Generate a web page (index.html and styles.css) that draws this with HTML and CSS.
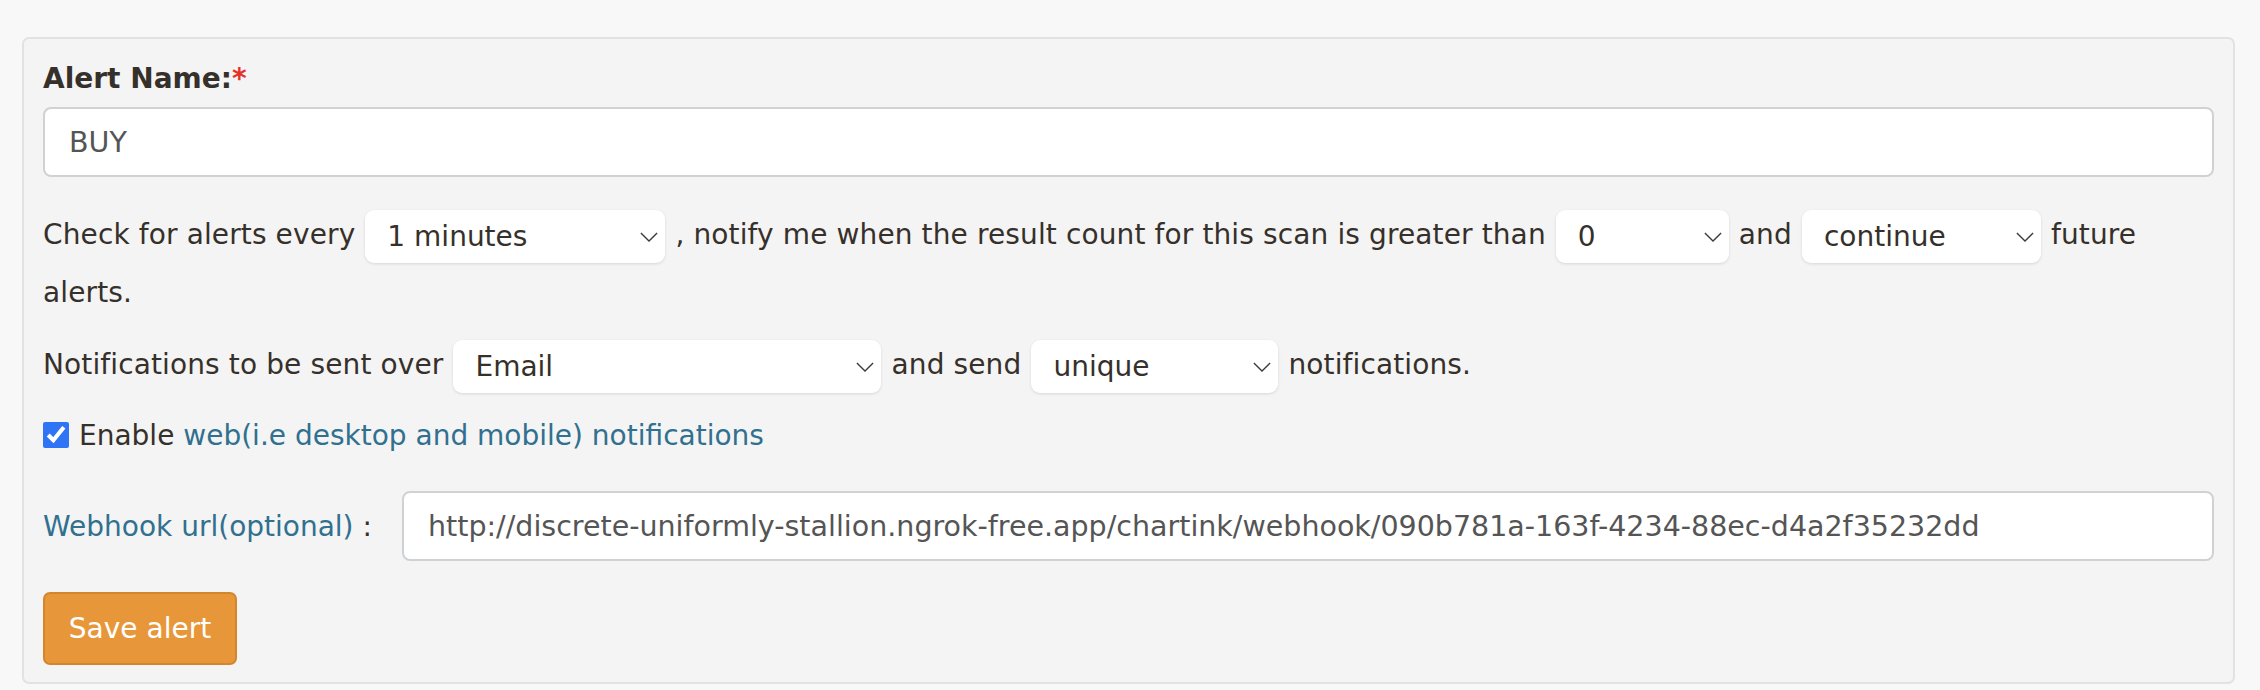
FILE: index.html
```html
<!DOCTYPE html>
<html lang="en">
<head>
    <meta charset="UTF-8">
    <title>Alert settings</title>
    <link rel="stylesheet" href="styles.css">
</head>
<body>
    <form class="alert-panel">
        <label class="field-label" for="alertName">Alert Name:<span class="req">*</span></label>
        <input type="text" id="alertName" class="text-input" value="BUY">

        <p class="sentence"><span>Check for alerts every</span>
            <span class="select-wrap w-freq"><select><option>1 minutes</option></select><svg class="chev" viewBox="0 0 20 11"><path d="M1 1l9 9 9-9"/></svg></span>
            <span>, notify me when the result count for this scan is greater than</span>
            <span class="select-wrap w-count"><select><option>0</option></select><svg class="chev" viewBox="0 0 20 11"><path d="M1 1l9 9 9-9"/></svg></span>
            <span>and</span>
            <span class="select-wrap w-mode"><select><option>continue</option></select><svg class="chev" viewBox="0 0 20 11"><path d="M1 1l9 9 9-9"/></svg></span>
            <span>future</span><br><span>alerts.</span></p>

        <p class="sentence second"><span>Notifications to be sent over</span>
            <span class="select-wrap w-channel"><select><option>Email</option></select><svg class="chev" viewBox="0 0 20 11"><path d="M1 1l9 9 9-9"/></svg></span>
            <span>and send</span>
            <span class="select-wrap w-unique"><select><option>unique</option></select><svg class="chev" viewBox="0 0 20 11"><path d="M1 1l9 9 9-9"/></svg></span>
            <span>notifications.</span></p>

        <label class="check-row">
            <input type="checkbox" checked>
            <span>Enable <a href="#">web(i.e desktop and mobile) notifications</a></span>
        </label>

        <div class="webhook-row">
            <label class="webhook-label" for="webhook"><a href="#">Webhook url(optional)</a> :</label>
            <input type="text" id="webhook" class="text-input" value="http://discrete-uniformly-stallion.ngrok-free.app/chartink/webhook/090b781a-163f-4234-88ec-d4a2f35232dd">
        </div>

        <button type="button" class="save-btn">Save alert</button>
    </form>
</body>
</html>
```

FILE: styles.css
```css
body {
    margin: 0;
    padding: 37px 25px 5px 22px;
    background: #f8f8f8;
    font-family: "DejaVu Sans", Verdana, sans-serif;
    font-size: 28px;
    color: #36302b;
}
a {
    color: #31708f;
    text-decoration: none;
}
.alert-panel {
    background: #f4f4f4;
    border: 2px solid #e2e2e2;
    border-radius: 7px;
    padding: 20px 19px 17px 19px;
}
.field-label {
    display: block;
    font-weight: bold;
    line-height: 40px;
    margin-bottom: 8px;
}
.req {
    color: #e4322b;
}
.text-input {
    display: block;
    box-sizing: border-box;
    width: 100%;
    height: 70px;
    padding: 0 24px;
    border: 2px solid #cfd2d5;
    border-radius: 8px;
    background: #fff;
    font-family: "DejaVu Sans", Verdana, sans-serif;
    font-size: 28.5px;
    color: #555;
    outline: none;
}
.sentence {
    margin: 29px 0 0;
    line-height: 58px;
    letter-spacing: 0.12px;
}
.sentence.second {
    margin-top: 14px;
}
.select-wrap {
    position: relative;
    display: inline-block;
    vertical-align: middle;
    height: 53px;
    margin: 0 1px;
    letter-spacing: 0;
}
.select-wrap select {
    appearance: none;
    box-sizing: border-box;
    width: 100%;
    height: 53px;
    padding: 0 40px 0 22px;
    border: none;
    border-radius: 9px;
    background: #fff;
    box-shadow: 0 1px 3px rgba(0, 0, 0, 0.12);
    font-family: "DejaVu Sans", Verdana, sans-serif;
    font-size: 28px;
    color: #36302b;
    vertical-align: top;
}
.chev {
    position: absolute;
    right: 7px;
    top: 22px;
    width: 18px;
    height: 10px;
    fill: none;
    stroke: #3d3935;
    stroke-width: 1.5;
    pointer-events: none;
}
.w-freq { width: 300px; }
.w-count { width: 173px; }
.w-mode { width: 239px; }
.w-channel { width: 428px; }
.w-unique { width: 247px; }
.check-row {
    display: flex;
    align-items: center;
    gap: 10px;
    margin-top: 12px;
    height: 58px;
}
.check-row input {
    width: 26px;
    height: 26px;
    margin: 0;
    accent-color: #2f74f5;
}
.webhook-row {
    display: flex;
    align-items: center;
    margin-top: 27px;
}
.webhook-label {
    flex: none;
    width: 359px;
}
.webhook-row .text-input {
    flex: 1;
}
.save-btn {
    display: block;
    margin-top: 31px;
    width: 194px;
    height: 73px;
    padding: 0 20px;
    background: #e7973a;
    border: 2px solid #d4862d;
    border-radius: 7px;
    color: #fff;
    font-family: "DejaVu Sans", Verdana, sans-serif;
    font-size: 28px;
    white-space: nowrap;
    text-align: center;
}
```
